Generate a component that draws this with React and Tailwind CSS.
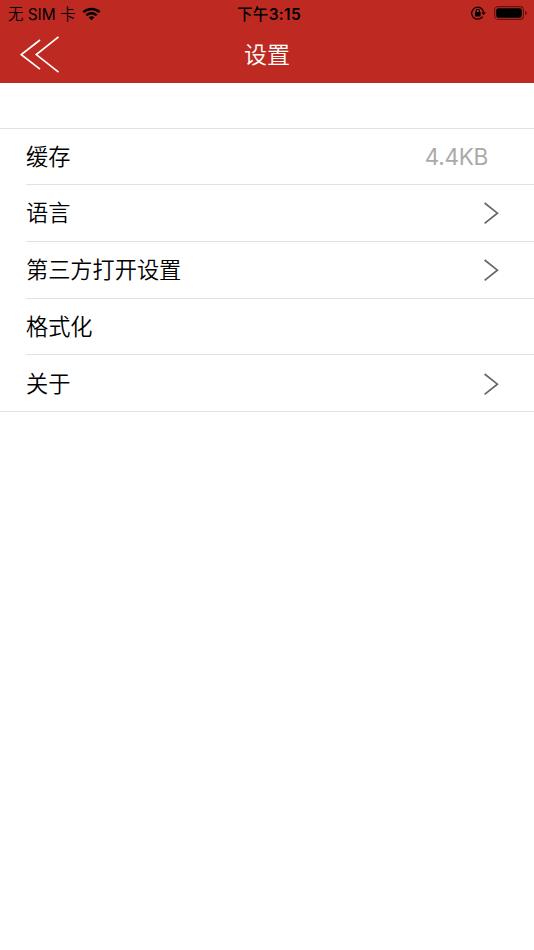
const rows = [
  { label: '缓存', value: '4.4KB', height: 'h-14' },
  { label: '语言', chevron: true, height: 'h-[57px]' },
  { label: '第三方打开设置', chevron: true, height: 'h-[57px]' },
  { label: '格式化', height: 'h-14' },
  { label: '关于', chevron: true, height: 'h-14 pt-px' },
];

function WifiIcon() {
  return (
    <svg className="ml-[7px] h-[14px] w-[19px]" viewBox="0 0 19 14" fill="none" stroke="#000" strokeWidth="2.5">
      <path d="M1.4 5.1 C5.8 0.8 13.2 0.8 17.6 5.1" />
      <path d="M4.4 8.4 C7.2 5.6 11.8 5.6 14.6 8.4" />
      <path d="M9.5 13.2 L6.6 10.3 Q9.5 8 12.4 10.3 Z" fill="#000" stroke="none" />
    </svg>
  );
}

function RotationLockIcon() {
  return (
    <svg className="h-[14px] w-[15px]" viewBox="0 0 15 14" fill="none" stroke="#000">
      <path d="M11.6 10.6 A6 6 0 1 1 12.6 6.2" strokeWidth="1.2" />
      <path d="M10.2 6.2 H15 L12.6 9.2 Z" fill="#000" stroke="none" />
      <rect x="4" y="6" width="5.6" height="4.5" rx="0.5" fill="#000" stroke="none" />
      <path d="M5.2 6.5 V4.8 A1.6 1.6 0 0 1 8.4 4.8 V6.5" strokeWidth="1.1" />
    </svg>
  );
}

function BatteryIcon() {
  return (
    <svg className="ml-2 h-[14px] w-[34px]" viewBox="0 0 34 14">
      <rect x="0.6" y="0.6" width="28.8" height="12.8" rx="3.4" fill="none" stroke="#000" strokeOpacity="0.5" strokeWidth="1.1" />
      <rect x="2.2" y="2.2" width="25.6" height="9.6" rx="2" fill="#000" />
      <path d="M31 4.8 Q33 5.4 33 7 Q33 8.6 31 9.2 Z" fill="#000" fillOpacity="0.5" />
    </svg>
  );
}

function Chevron() {
  return (
    <svg className="mr-[34px] h-6 w-4" viewBox="0 0 16 24" fill="none" stroke="#666" strokeWidth="1.7">
      <path d="M0.6 2 L13.4 12.2 L0.6 22.4" />
    </svg>
  );
}

export default function App() {
  return (
    <div className="flex h-[950px] w-[534px] flex-col bg-white font-['Inter','Noto_Sans_CJK_SC',sans-serif] text-black">
      <header className="h-[83px] bg-[#be2a22]">
        <div className="grid h-[27px] grid-cols-[1fr_auto_1fr] items-center">
          <div className="flex items-center pl-2 text-[15.4px] leading-6">
            <span className="pt-[3px] whitespace-pre">
              <span className="font-[350]">无</span> SIM <span className="font-[350]">卡</span>
            </span>
            <WifiIcon />
          </div>
          <div className="pt-[3px] pl-1 text-[15.5px] leading-6 font-semibold tracking-[0.3px]">
            <span className="font-medium">下午</span>3:15
          </div>
          <div className="flex items-center justify-end pr-1.5 pb-px">
            <RotationLockIcon />
            <BatteryIcon />
          </div>
        </div>
        <div className="grid h-14 grid-cols-[1fr_auto_1fr] items-center text-white">
          <svg className="ml-5 h-[38px] w-10" viewBox="0 0 40 38" fill="none" stroke="#fff" strokeWidth="1.7">
            <path d="M20 4 L1.3 18.6 L20 33.2" />
            <path d="M38.5 0.8 L16.3 18.6 L38.5 36.2" />
          </svg>
          <h1 className="text-[23px] leading-[54px] font-[350]">设置</h1>
        </div>
      </header>
      <main className="pt-[45px]">
        <ul className="border-y border-[#e2e2e2]">
          {rows.map((row) => (
            <li key={row.label} className="group pl-[26px]">
              <div className={`flex items-center justify-between border-b border-[#e2e2e2] group-last:-ml-[26px] group-last:border-b-0 group-last:pl-[26px] ${row.height}`}>
                <span className="text-[22.2px] leading-[54px] font-[350]">{row.label}</span>
                {row.value && (
                  <span className="mr-[46px] text-[22.6px] tracking-[-0.35px] text-[#aaa]">{row.value}</span>
                )}
                {row.chevron && <Chevron />}
              </div>
            </li>
          ))}
        </ul>
      </main>
    </div>
  );
}
